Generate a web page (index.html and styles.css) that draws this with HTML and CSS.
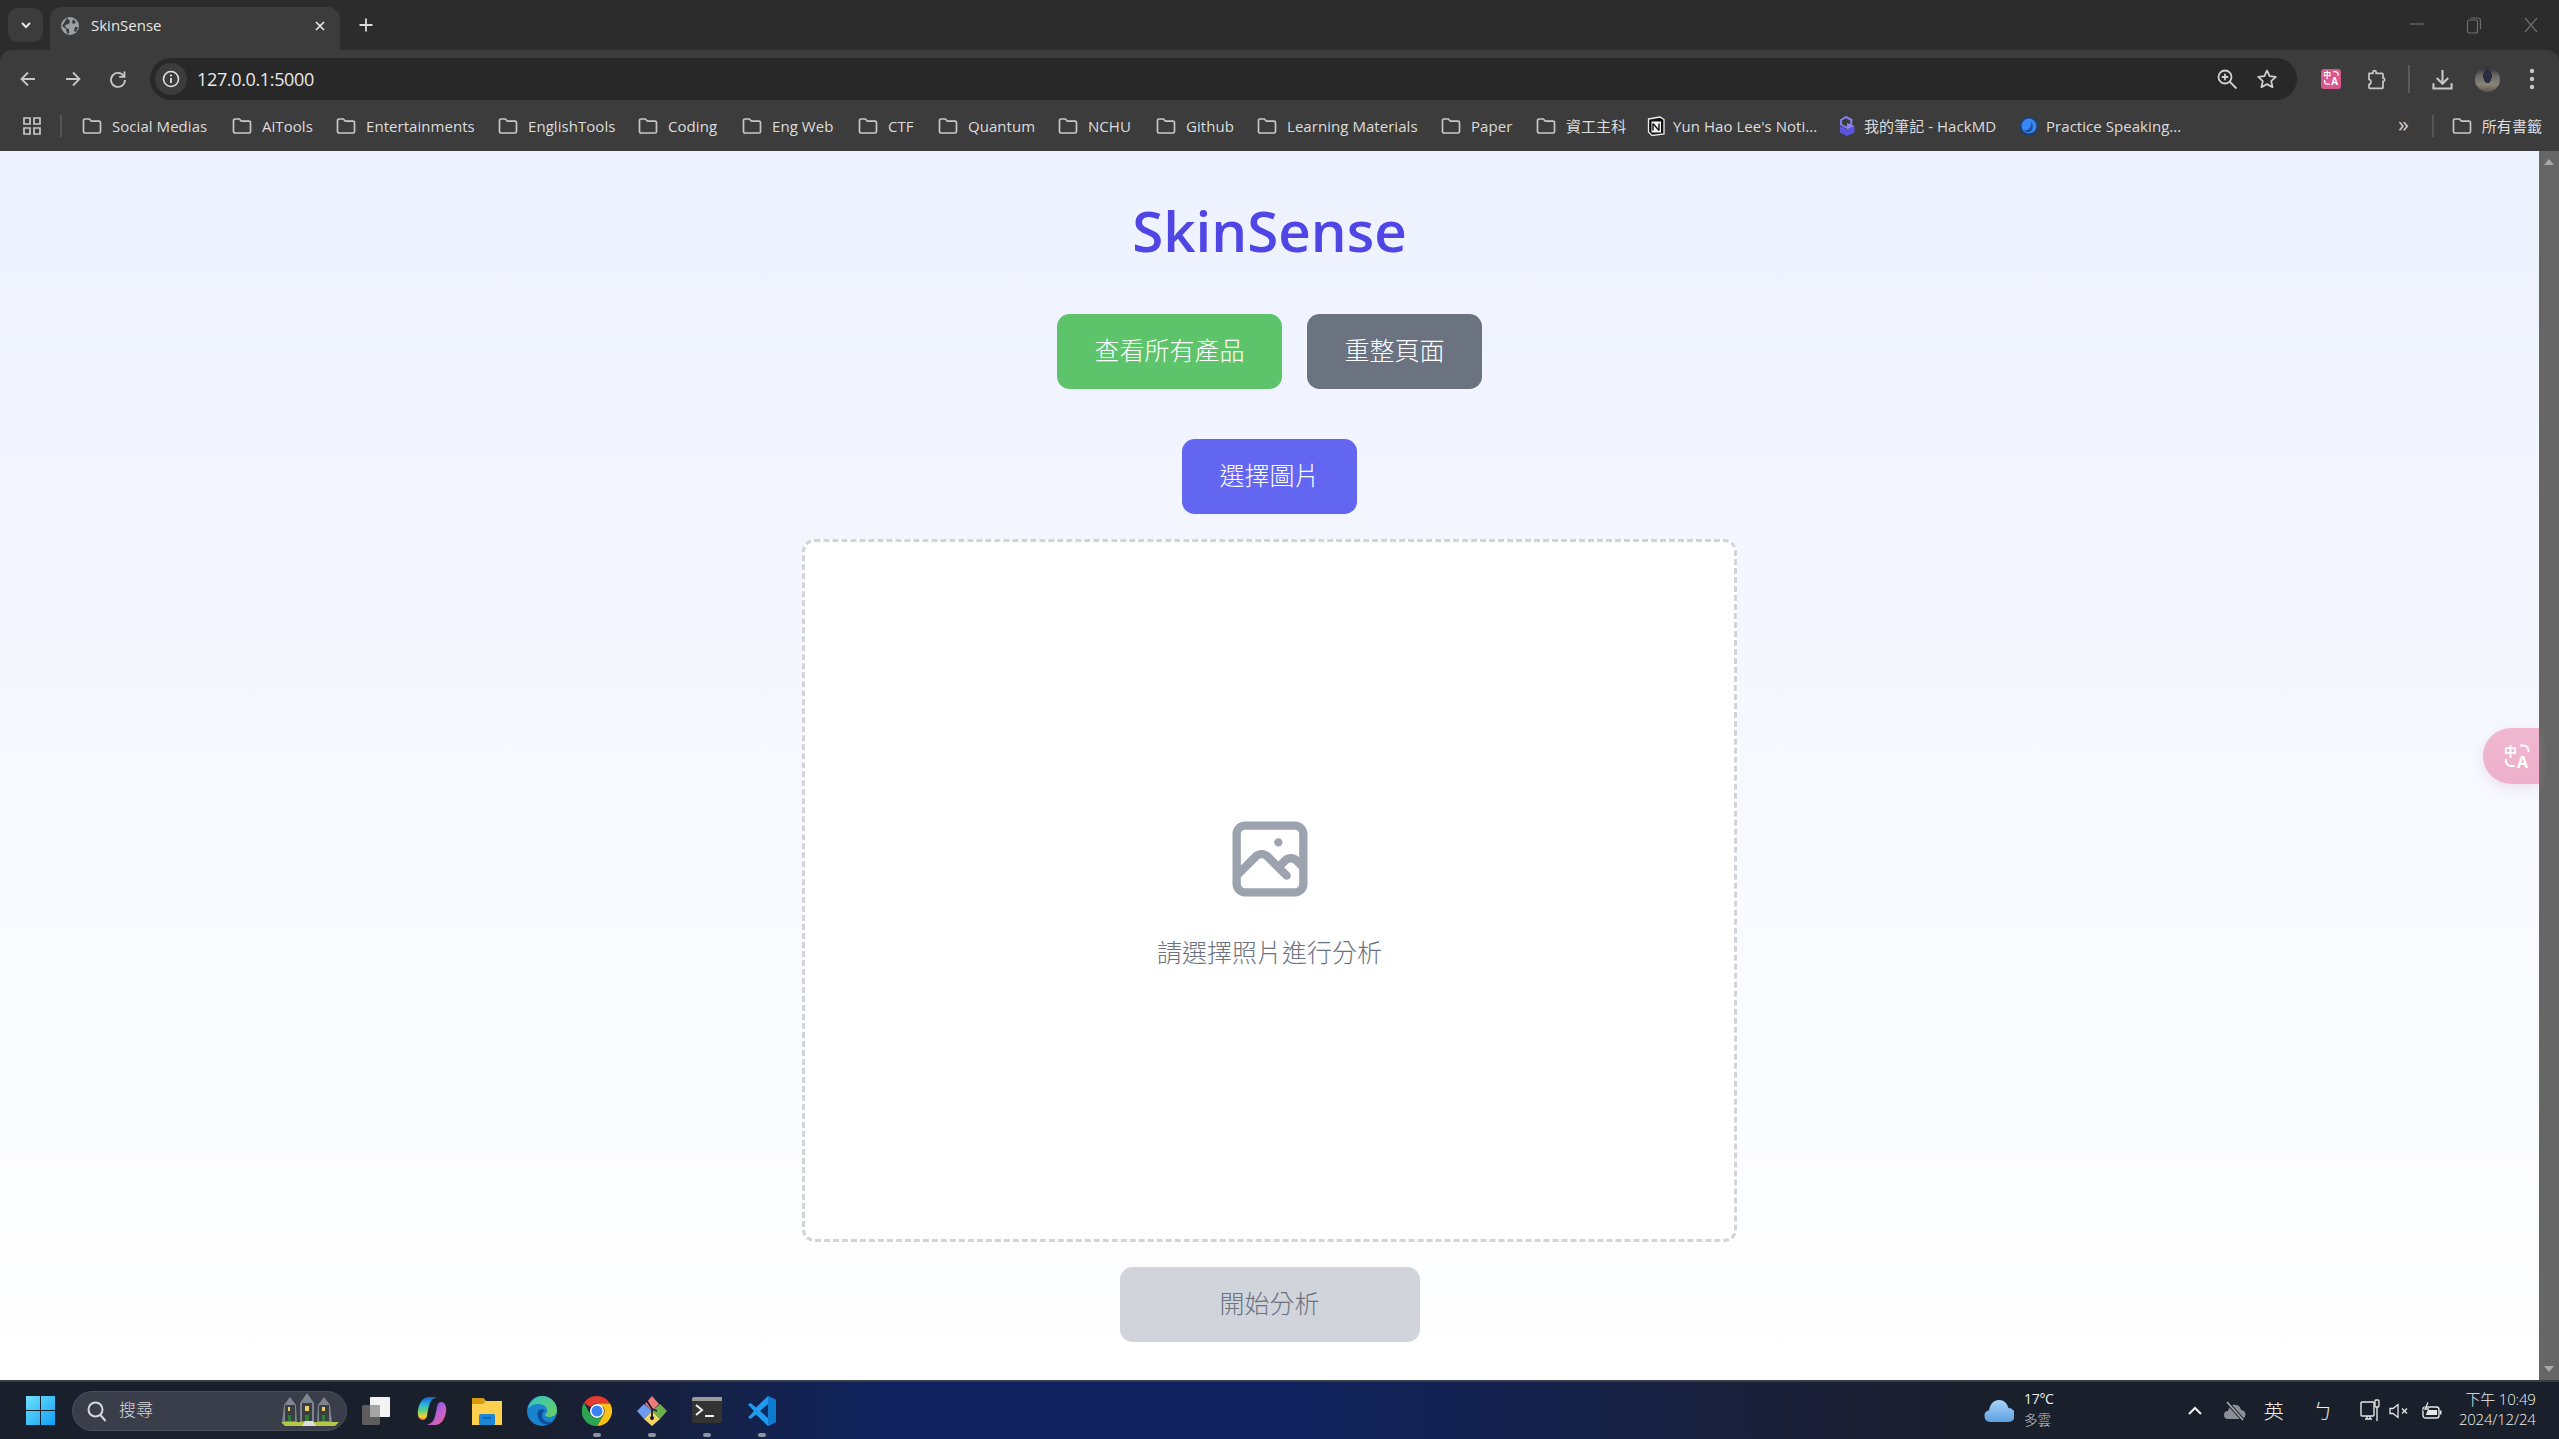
FILE: index.html
```html
<!DOCTYPE html>
<html lang="zh-Hant">
<head>
<meta charset="utf-8">
<title>SkinSense</title>
<link rel="stylesheet" href="styles.css">
</head>
<body>
<svg class="defs" width="0" height="0">
  <symbol id="folder" viewBox="0 0 20 20"><path d="M1.500 4.600c0-.9.700-1.600 1.600-1.600h4.300l2 2.200h7.500c.9 0 1.600.7 1.600 1.600v8.600c0 .9-.7 1.600-1.600 1.600H3.100c-.9 0-1.600-.7-1.600-1.600z" fill="none" stroke="#c7c7c7" stroke-width="1.700" stroke-linejoin="round"/></symbol>
</svg>
<div class="window">
  <header class="tabstrip">
    <button class="tab-search"><svg width="14" height="14" viewBox="0 0 14 14"><path d="M3 5l4 4 4-4" fill="none" stroke="#e6e6e6" stroke-width="2"/></svg></button>
    <div class="tab">
      <svg class="favicon" width="20" height="20" viewBox="0 0 20 20"><circle cx="10" cy="10" r="9" fill="#9aa0a6"/><path d="M7 2l3 3-1 3-4 1 1 3 3 1v5l-2-1-1-4-4-3zM13 3l3 3-2 2-2-1zM15 11l3 0-2 5-2-1z" fill="#3c3c3c"/></svg>
      <span class="tab-title">SkinSense</span>
      <svg class="tab-close" width="14" height="14" viewBox="0 0 14 14"><path d="M3 3l8 8M11 3l-8 8" stroke="#e6e6e6" stroke-width="1.700"/></svg>
    </div>
    <svg class="new-tab" width="18" height="18" viewBox="0 0 18 18"><path d="M9 2.500v13M2.500 9h13" stroke="#dcdcdc" stroke-width="1.800"/></svg>
    <div class="win-controls">
      <svg width="16" height="16" viewBox="0 0 16 16"><path d="M1 8h14" stroke="#6e6e6e" stroke-width="1.200"/></svg>
      <svg width="16" height="18" viewBox="0 0 16 18"><rect x="1.500" y="4" width="10" height="13" rx="2" fill="none" stroke="#6e6e6e" stroke-width="1.200"/><path d="M4.500 2h7c2 0 3 1 3 3v8" fill="none" stroke="#6e6e6e" stroke-width="1.200"/></svg>
      <svg width="16" height="18" viewBox="0 0 16 18"><path d="M2 2l12 14M14 2L2 16" stroke="#6e6e6e" stroke-width="1.200"/></svg>
    </div>
  </header>

  <nav class="toolbar">
    <div class="nav-row">
      <button class="nav-btn"><svg width="20" height="20" viewBox="0 0 20 20"><path d="M17 10H4M10 3.500L3.500 10l6.500 6.500" fill="none" stroke="#c7c7c7" stroke-width="1.800"/></svg></button>
      <button class="nav-btn"><svg width="20" height="20" viewBox="0 0 20 20"><path d="M3 10h13M10 3.500l6.500 6.500-6.500 6.500" fill="none" stroke="#c7c7c7" stroke-width="1.800"/></svg></button>
      <button class="nav-btn"><svg width="20" height="20" viewBox="0 0 20 20"><path d="M15.800 7A7 7 0 1 0 17 11" fill="none" stroke="#c7c7c7" stroke-width="1.800"/><path d="M16.500 2.500V7.800H11.200" fill="none" stroke="#c7c7c7" stroke-width="1.800"/></svg></button>
      <div class="omnibox">
        <span class="site-info"><svg width="20" height="20" viewBox="0 0 20 20"><circle cx="10" cy="10" r="7.500" fill="none" stroke="#e0e0e0" stroke-width="1.600"/><path d="M10 9v5" stroke="#e0e0e0" stroke-width="1.800"/><circle cx="10" cy="6.500" r="1.100" fill="#e0e0e0"/></svg></span>
        <span class="url">127.0.0.1:5000</span>
        <svg class="omni-zoom" width="22" height="22" viewBox="0 0 22 22"><circle cx="9" cy="9" r="6.500" fill="none" stroke="#d0d0d0" stroke-width="1.800"/><path d="M9 5.800v6.400M5.800 9h6.400" stroke="#d0d0d0" stroke-width="1.800"/><path d="M14 14l6.500 6.500" stroke="#d0d0d0" stroke-width="1.800"/></svg>
        <svg class="omni-star" width="22" height="22" viewBox="0 0 22 22"><path d="M11 2.500l2.600 5.700 6.200.7-4.600 4.200 1.300 6.100-5.500-3.100-5.500 3.100 1.300-6.100L2.200 8.900l6.200-.7z" fill="none" stroke="#d0d0d0" stroke-width="1.800" stroke-linejoin="round"/></svg>
      </div>
      <div class="ext-area">
        <span class="ext-translate"><svg width="19" height="20" viewBox="-2 -3 31 33"><text x="0" y="11.500" class="tr-zh">中</text><text x="13" y="23.500" class="tr-a">A</text><path d="M16 1.500h3.500a5 5 0 0 1 5 4.500v2M2 15v2a5 5 0 0 0 5 5h3.500" fill="none" stroke="#fff" stroke-width="2"/></svg></span>
        <svg class="ext-puzzle" width="20" height="21" viewBox="0 0 22 24"><path d="M3 5h4.500V3.500c0-1 .8-1.700 1.800-1.700s1.800.7 1.800 1.700V5H18c.6 0 1 .4 1 1v4.500h.5c1.800 0 1.800 3.500 0 3.500H19v7c0 .6-.4 1-1 1H4c-.6 0-1-.4-1-1v-3.500c3-.2 3-5.300 0-5.500V6c0-.6.400-1 1-1z" fill="none" stroke="#c7c7c7" stroke-width="2" stroke-linejoin="round"/></svg>
        <span class="ext-divider"></span>
        <svg class="ext-download" width="21" height="21" viewBox="0 0 22 22"><path d="M11 1v14M5 9.500l6 6 6-6" fill="none" stroke="#c7c7c7" stroke-width="2.200"/><path d="M1.500 15v5.500h19V15" fill="none" stroke="#c7c7c7" stroke-width="2.200"/></svg>
        <span class="avatar"></span>
        <svg class="ext-menu" width="6" height="24" viewBox="0 0 6 24"><circle cx="3" cy="4" r="2.200" fill="#c7c7c7"/><circle cx="3" cy="12" r="2.200" fill="#c7c7c7"/><circle cx="3" cy="20" r="2.200" fill="#c7c7c7"/></svg>
      </div>
    </div>
    <div class="bookmarks">
      <svg class="apps" width="18" height="18" viewBox="0 0 18 18"><path d="M1 1h6v6H1zM11 1h6v6h-6zM1 11h6v6H1zM11 11h6v6h-6z" fill="none" stroke="#c7c7c7" stroke-width="1.700"/></svg>
      <span class="bm-divider"></span>
      <a class="bm bm-w97"><svg class="ico"><use href="#folder"/></svg>Social Medias</a>
      <a class="bm bm-w50"><svg class="ico"><use href="#folder"/></svg>AiTools</a>
      <a class="bm bm-w107"><svg class="ico"><use href="#folder"/></svg>Entertainments</a>
      <a class="bm bm-w86"><svg class="ico"><use href="#folder"/></svg>EnglishTools</a>
      <a class="bm bm-w50"><svg class="ico"><use href="#folder"/></svg>Coding</a>
      <a class="bm bm-w62"><svg class="ico"><use href="#folder"/></svg>Eng Web</a>
      <a class="bm bm-w25"><svg class="ico"><use href="#folder"/></svg>CTF</a>
      <a class="bm bm-w66"><svg class="ico"><use href="#folder"/></svg>Quantum</a>
      <a class="bm bm-w44"><svg class="ico"><use href="#folder"/></svg>NCHU</a>
      <a class="bm bm-w48"><svg class="ico"><use href="#folder"/></svg>Github</a>
      <a class="bm bm-w130"><svg class="ico"><use href="#folder"/></svg>Learning Materials</a>
      <a class="bm bm-w41"><svg class="ico"><use href="#folder"/></svg>Paper</a>
      <a class="bm bm-w60"><svg class="ico"><use href="#folder"/></svg>資工主科</a>
      <a class="bm bm-w145 bm-tight"><svg class="ico" viewBox="0 0 20 20"><path d="M2.500 3L14 1l4 2.500V18L6 19.500 2.500 16z" fill="#111" stroke="#eee" stroke-width="1.300"/><path d="M5.500 5.500h9.500v11H5.500z" fill="#f4f4f4"/><path d="M7 7.500v7M7 7.500l6 7M13 7.500v7" stroke="#111" stroke-width="1.400" fill="none"/></svg>Yun Hao Lee's Noti...</a>
      <a class="bm bm-w135 bm-tight"><svg class="ico" viewBox="0 0 20 20"><path d="M9 1l5.500 3-.5 5-5 2.500L4 8.500V4z" fill="none" stroke="#8480f0" stroke-width="2" stroke-linejoin="round"/><path d="M3 10l7 3.500 7.500-3.500v6.500L10 20l-7-3.500z" fill="#5a55e0"/><path d="M10 7l7.500 3-7.500 3.500z" fill="#8a86f5"/></svg>我的筆記 - HackMD</a>
      <a class="bm bm-w135 bm-tight"><svg class="ico" viewBox="0 0 20 20"><circle cx="10" cy="10" r="9.500" fill="#1d3e73"/><circle cx="10" cy="10" r="7.500" fill="#3a86f0"/><path d="M5 14c5 1 8-3 7-8 3 3 2 9-2 10-2 .5-4-.5-5-2z" fill="#1d4d96"/></svg>Practice Speaking...</a>
      <span class="bm-more">»</span>
      <span class="bm-divider bm-divider-end"></span>
      <a class="bm bm-all"><svg class="ico"><use href="#folder"/></svg>所有書籤</a>
    </div>
  </nav>

  <div class="viewport">
    <main class="page">
      <h1 class="brand">SkinSense</h1>
      <div class="actions">
        <button class="btn btn-green">查看所有產品</button>
        <button class="btn btn-gray">重整頁面</button>
      </div>
      <button class="btn btn-indigo">選擇圖片</button>
      <section class="dropzone">
        <svg class="photo-icon" width="100" height="100" viewBox="0 0 24 24" fill="none" stroke="#9ca3af" stroke-width="2" stroke-linecap="round" stroke-linejoin="round"><path d="M4 16l4.586-4.586a2 2 0 012.828 0L16 16m-2-2l1.586-1.586a2 2 0 012.828 0L20 14m-6-6h.01M6 20h12a2 2 0 002-2V6a2 2 0 00-2-2H6a2 2 0 00-2 2v12a2 2 0 002 2z"/></svg>
        <p class="hint">請選擇照片進行分析</p>
      </section>
      <button class="btn btn-disabled" disabled>開始分析</button>
    </main>
    <div class="float-translate"><svg width="31" height="33" viewBox="-2 -3 31 33"><text x="0" y="11.500" class="tr-zh">中</text><text x="13" y="23.500" class="tr-a">A</text><path d="M16 1.500h3.500a5 5 0 0 1 5 4.500v2M2 15v2a5 5 0 0 0 5 5h3.500" fill="none" stroke="#fff" stroke-width="2"/></svg></div>
    <div class="scrollbar">
      <span class="arrow-up"></span>
      <span class="arrow-down"></span>
    </div>
  </div>

  <footer class="taskbar">
    <svg class="win-logo" width="29" height="29" viewBox="0 0 29 29"><defs><linearGradient id="wl" x1="0" y1="0" x2="1" y2="1"><stop offset="0" stop-color="#6fe3fb"/><stop offset="1" stop-color="#0f9cf5"/></linearGradient></defs><path d="M0 0h14v14H0zM15 0h14v14H15zM0 15h14v14H0zM15 15h14v14H15z" fill="url(#wl)"/></svg>
    <div class="search">
      <svg width="24" height="24" viewBox="0 0 24 24"><circle cx="10.500" cy="10.500" r="7" fill="none" stroke="#d5d7db" stroke-width="2"/><path d="M15.500 16l5 6" stroke="#d5d7db" stroke-width="2"/></svg>
      <span class="search-text">搜尋</span>
      <svg class="search-art" width="60" height="36" viewBox="0 0 60 36"><path d="M1 32l2-18 6-8 6 8 1 18zM19 32V12l7-10 7 10v20zM36 32l1-18 6-8 6 8 2 18z" fill="#7c8590"/><path d="M4 14h10v16H4zM21 12h10v18H21zM38 14h10v16H38z" fill="#3c3f3f"/><path d="M7 16h2v4H7zM24 15h4v5h-4zM41 16h3v4h-3z" fill="#e9cf6b"/><path d="M7 24h3v6H7zM24 24h4v6h-4zM41 24h3v6h-3z" fill="#2e7a38"/><path d="M0 31h58l-4 4H4z" fill="#b4c746"/><path d="M24 30h8l3 5H21z" fill="#ddd"/></svg>
    </div>
    <div class="task-icons">
      <span class="task-cell"><svg width="30" height="30" viewBox="0 0 30 30"><rect x="0" y="9" width="18" height="20" rx="1.500" fill="#5d5d5d"/><rect x="8" y="1" width="20" height="20" rx="1" fill="#f3f3f3"/><rect x="8" y="9" width="10" height="12" fill="#a5a5a5"/></svg></span>
      <span class="task-cell"><svg width="30" height="30" viewBox="0 0 30 30"><defs><linearGradient id="cp1" x1="0" y1="0" x2="0" y2="1"><stop offset="0" stop-color="#1560d8"/><stop offset=".35" stop-color="#2fb6d8"/><stop offset=".6" stop-color="#5fd07a"/><stop offset=".85" stop-color="#f5d33a"/><stop offset="1" stop-color="#f0664a"/></linearGradient><linearGradient id="cp2" x1="0" y1="0" x2="1" y2="1"><stop offset="0" stop-color="#2a48d8"/><stop offset=".5" stop-color="#b45fd8"/><stop offset="1" stop-color="#f4648a"/></linearGradient></defs><path d="M12 1h8l-4 2c-3 2-4 6-5 11l-1 6c-.5 2-2 4-4 4-4 0-6-5-5-10C2 7 6 1 12 1z" fill="url(#cp1)"/><path d="M18 29h-8l4-2c3-2 4-6 5-11l1-6c.5-2 2-4 4-4 4 0 6 5 5 10-1 7-5 13-11 13z" fill="url(#cp2)"/></svg></span>
      <span class="task-cell"><svg width="30" height="30" viewBox="0 0 30 30"><path d="M0 2h11l3 3h16v24H0z" fill="#ffd04d"/><path d="M0 2h11l3 3-3 3H0z" fill="#d79b13"/><rect x="7" y="18" width="16" height="11" rx="1.500" fill="#1c86d8"/><path d="M11 22h8" stroke="#0b5aa5" stroke-width="1.500"/></svg></span>
      <span class="task-cell"><svg width="30" height="30" viewBox="0 0 30 30"><defs><linearGradient id="ed" x1="0" y1="0" x2="1" y2="1"><stop offset="0" stop-color="#35c3c1"/><stop offset="1" stop-color="#6ad15a"/></linearGradient></defs><circle cx="15" cy="15" r="15" fill="#1b82cf"/><path d="M1 13C3 4 10 0 15 0c9 0 15 7 15 14 0 5-4 7-8 7-2 0-4-1-4-3 3-1 3-5 0-8-4-3-13-3-17 3z" fill="url(#ed)"/><path d="M12 14c-3 3-2 11 5 14 3 1 7 0 9-2-6 1-11-2-11-6 0-2 0-4 3-5-2-2-4-2-6-1z" fill="#0f4f96"/></svg></span>
      <span class="task-cell"><svg width="30" height="30" viewBox="0 0 30 30"><path d="M15 0a15 15 0 0 1 13 7.500H15a7.500 7.500 0 0 0-6.500 3.800L2 7A15 15 0 0 1 15 0z" fill="#e33b2e"/><path d="M28 7.500A15 15 0 0 1 15 30l6.500-11.200a7.500 7.500 0 0 0 0-7.500L15 7.500z" fill="#fbc116"/><path d="M2 7l6.500 11.200A7.500 7.500 0 0 0 21.500 18.800L15 30A15 15 0 0 1 2 7z" fill="#2da44e"/><circle cx="15" cy="15" r="7" fill="#fff"/><circle cx="15" cy="15" r="5.500" fill="#3b82f6"/></svg><i class="run-dot"></i></span>
      <span class="task-cell"><svg width="30" height="30" viewBox="0 0 30 30"><path d="M15 0l7 8-7 7-7-7z" fill="#ee7a78"/><path d="M7 8l8 7-8 8-7-8z" fill="#6e9bf2"/><path d="M23 8l7 7-7 8-8-8z" fill="#6fb04a"/><path d="M15 15l8 8-8 7-8-7z" fill="#f5d56a"/><path d="M10 5l5 8v9M15 13l5 2" fill="none" stroke="#1a1f2e" stroke-width="1.800"/><circle cx="15" cy="22" r="2" fill="#1a1f2e"/></svg><i class="run-dot"></i></span>
      <span class="task-cell"><svg width="30" height="30" viewBox="0 0 30 30"><rect y="1" width="30" height="26" rx="2" fill="#333"/><path d="M0 3c0-1 1-2 2-2h28v4H0z" fill="#9a9a9a"/><path d="M4 9l6 5-6 5" fill="none" stroke="#eee" stroke-width="2"/><path d="M13 20h9" stroke="#eee" stroke-width="2"/></svg><i class="run-dot"></i></span>
      <span class="task-cell"><svg width="30" height="30" viewBox="0 0 30 30"><path d="M21 0l8 4v22l-8 4L9 18.500 3.500 23 1 21.500 7 15 1 8.500 3.500 7 9 11.500z" fill="#1f9cf0"/><path d="M21 8l-8 7 8 7z" fill="#0d2a62"/><path d="M21 0l8 4v22l-8 4z" fill="#0e7ad0"/></svg><i class="run-dot"></i></span>
    </div>
    <div class="weather">
      <svg width="30" height="22" viewBox="0 0 30 22"><defs><linearGradient id="cl" x1="0" y1="0" x2="0" y2="1"><stop offset="0" stop-color="#a9d4fb"/><stop offset="1" stop-color="#5e9fe0"/></linearGradient></defs><path d="M6 22a6 6 0 0 1-1-11.800C6 4 10 0 15 0s8 3 9.500 8A7 7 0 0 1 24 22z" fill="url(#cl)"/></svg>
      <div class="weather-text"><span>17°C</span><span class="weather-sub">多雲</span></div>
    </div>
    <div class="tray">
      <svg class="tray-chevron" width="16" height="10" viewBox="0 0 16 10"><path d="M2 8l6-6 6 6" fill="none" stroke="#f0f0f0" stroke-width="2"/></svg>
      <svg class="tray-cloud" width="22" height="20" viewBox="0 0 22 20"><path d="M4 18a4 4 0 0 1 0-8c1-4 4-7 8-6 3 0 5 3 5 5a4.500 4.500 0 0 1 0 9z" fill="#8b8f94"/><path d="M3 1l16 18" stroke="#20232c" stroke-width="3.500"/><path d="M3 1l16 18" stroke="#a9adb2" stroke-width="1.500"/></svg>
      <span class="tray-ime">英</span>
      <span class="tray-bopomofo">ㄅ</span>
      <svg class="tray-device" width="20" height="24" viewBox="0 0 20 24"><rect x="1" y="3" width="13" height="14" rx="1" fill="none" stroke="#e6e6e6" stroke-width="1.400"/><path d="M5 20h7M7 17v3M10 17v3" stroke="#e6e6e6" stroke-width="1.400"/><rect x="15" y="1" width="4" height="7" rx="1" fill="#20232c" stroke="#e6e6e6" stroke-width="1.300"/><path d="M17 8v14" stroke="#e6e6e6" stroke-width="1.400"/></svg>
      <svg class="tray-sound" width="20" height="16" viewBox="0 0 20 16"><path d="M1 5.500h3L9 1.500v13l-5-4H1z" fill="none" stroke="#e6e6e6" stroke-width="1.300"/><path d="M13 5.500l5 5M18 5.500l-5 5" stroke="#e6e6e6" stroke-width="1.400"/></svg>
      <svg class="tray-battery" width="21" height="18" viewBox="0 0 21 18"><rect x="1" y="5" width="16" height="11" rx="2.500" fill="none" stroke="#e6e6e6" stroke-width="1.400"/><rect x="4" y="8" width="11" height="5" fill="#e6e6e6"/><path d="M18 8.500h1.500v4H18z" fill="#e6e6e6"/><path d="M6 0L2 8h3L3 13" fill="none" stroke="#20232c" stroke-width="1.500"/><path d="M6 0.500L3 7h4" fill="none" stroke="#e6e6e6" stroke-width="1.300"/></svg>
      <div class="clock"><span>下午 10:49</span><span>2024/12/24</span></div>
    </div>
  </footer>
</div>
</body>
</html>
```
FILE: styles.css
```css
* { box-sizing: border-box; }
html, body { margin: 0; height: 100%; overflow: hidden; }
body { font-family: "Open Sans", "Noto Sans CJK TC", sans-serif; }
.defs { position: absolute; }
.tr-zh { font: 700 13px "Noto Sans CJK TC", sans-serif; fill: #fff; }
.tr-a { font: 700 16px "Open Sans", sans-serif; fill: #fff; }
button { font: inherit; border: 0; padding: 0; background: none; }
svg { display: block; flex: none; }

.window { width: 2559px; height: 1439px; display: flex; flex-direction: column; background: #2c2c2c; }

/* tab strip */
.tabstrip { height: 50px; flex: none; display: flex; align-items: flex-start; padding-left: 8px; color: #e6e6e6; }
.tab-search { width: 35px; height: 34px; margin-top: 8px; border-radius: 10px; background: #3c3c3c; display: flex; align-items: center; justify-content: center; }
.tab { width: 290px; height: 43px; margin: 7px 0 0 7px; background: #3c3c3c; border-radius: 12px 12px 0 0; display: flex; align-items: center; padding: 0 13px 6px 10px; }
.tab-title { font-size: 15px; line-height: 20px; margin: 0 0 2px 11px; flex: 1; }
.new-tab { margin: 16px 0 0 17px; }
.win-controls { margin-left: auto; margin-top: 16px; padding-right: 20px; display: flex; gap: 41px; }

/* toolbar */
.toolbar { height: 101px; flex: none; background: #3c3c3c; border-radius: 12px 12px 0 0; display: flex; flex-direction: column; }
.nav-row { height: 50px; padding: 8px 0 0 6px; display: flex; align-items: stretch; }
.nav-btn { width: 44px; margin-right: 1px; display: flex; align-items: center; justify-content: center; }
.omnibox { flex: 1; margin-left: 9px; background: #282828; border-radius: 21px; display: flex; align-items: center; padding: 0 19px 0 5px; }
.site-info { width: 32px; height: 32px; border-radius: 50%; background: #3c3c3c; display: flex; align-items: center; justify-content: center; }
.url { font-size: 18px; color: #e8e8e8; margin-left: 10px; letter-spacing: -.35px; flex: 1; }
.omni-star { margin-left: 18px; }
.ext-area { width: 262px; display: flex; align-items: center; padding-left: 24px; }
.ext-translate { width: 20px; height: 20px; border-radius: 3px; background: #d8588d; display: flex; align-items: center; justify-content: center; }
.ext-puzzle { margin-left: 25px; }
.ext-divider { width: 2px; height: 28px; background: #5a5a5a; margin-left: 22px; }
.ext-download { margin-left: 22px; }
.avatar { width: 25px; height: 25px; border-radius: 50%; margin-left: 22px; background: radial-gradient(ellipse 18% 30% at 50% 36%, #2a2d42 0 90%, transparent 100%), linear-gradient(#2f2f32 0, #6a6a68 35%, #8a8478 70%, #5c564a 100%); }
.ext-menu { margin-left: 29px; }

.bookmarks { height: 51px; display: flex; align-items: center; padding-left: 23px; color: #dcdcdc; font-size: 15px; white-space: nowrap; }
.apps { margin-right: 19px; }
.bm-divider { width: 2px; height: 22px; background: #555; margin-right: 20px; }
.bm { display: flex; align-items: center; gap: 10px; margin-right: 23px; letter-spacing: .05px; }
.ico { width: 20px; height: 20px; flex: none; }
.bm-w97 { width: 127px; } .bm-w50 { width: 81px; } .bm-w107 { width: 139px; }
.bm-w86 { width: 117px; } .bm-w62 { width: 93px; } .bm-w25 { width: 57px; }
.bm-w66 { width: 97px; } .bm-w44 { width: 75px; } .bm-w48 { width: 78px; }
.bm-w130 { width: 161px; } .bm-w41 { width: 72px; } .bm-w60 { width: 87px; margin-right: 23px; }
.bm-w145 { width: 171px; } .bm-w135 { width: 162px; }
.bm-tight { gap: 7px; margin-right: 20px; }
.bm-more { margin-left: auto; font-size: 22px; line-height: 22px; margin-top: -5px; color: #d0d0d0; margin-right: 23px; }
.bm-divider-end { margin-right: 18px; }
.bm-all { margin-right: 17px; }

/* page */
.viewport { height: 1229px; flex: none; display: flex; position: relative; }
.page { flex: 1; height: 1229px; background: linear-gradient(#eef2ff, #fff); display: flex; flex-direction: column; align-items: center; padding-top: 50px; font-family: "Noto Sans CJK TC", "Open Sans", sans-serif; }
.brand { margin: 0; font-family: "Open Sans", sans-serif; font-size: 56.500px; line-height: 60px; font-weight: 600; color: #4f46e5; }
.actions { display: flex; gap: 25px; margin: 53px 0 50px; }
.btn { height: 75px; padding: 0 37.500px 5px; border-radius: 12.500px; font-size: 25px; font-weight: 300; line-height: 35px; color: #fff; }
.btn-green { background: #5ec46b; }
.btn-gray { background: #6b7280; }
.btn-indigo { background: #6366f1; }
.btn-disabled { background: #d1d5db; color: #6b7280; width: 300px; }
.dropzone { width: 935px; height: 703px; margin: 25px 0; padding-bottom: 3px; border: 3px dashed #d1d5db; border-radius: 12.500px; background: #fff; display: flex; flex-direction: column; align-items: center; justify-content: center; }
.hint { margin: 25px 0 0; font-size: 25px; font-weight: 300; line-height: 35px; color: #6b7280; }
.scrollbar { width: 20px; background: #666; display: flex; flex-direction: column; justify-content: space-between; align-items: center; padding: 8px 0; }
.arrow-up { border: 5px solid transparent; border-top: 0; border-bottom: 6px solid #a8a8a8; }
.arrow-down { border: 5px solid transparent; border-bottom: 0; border-top: 6px solid #a8a8a8; }
.float-translate { position: absolute; right: 20px; top: 577px; width: 56px; height: 56px; padding: 2px 0 0 12px; border-radius: 28px 0 0 28px; background: linear-gradient(#f0b8d0, #eeb0cb); box-shadow: 0 4px 12px rgba(200,150,180,.25); display: flex; align-items: center; justify-content: center; }

/* taskbar */
.taskbar { height: 59px; flex: none; border-top: 2px solid #3b3e46; background: linear-gradient(90deg, #1a1f2c 0, #1a1f2c 20%, #10235f 35%, #10235f 50%, #1a2038 70%, #1a1f2c 78%, #1a1f2c 100%); display: flex; align-items: center; padding-left: 26px; color: #f0f0f0; font-family: "Noto Sans CJK TC", "Open Sans", sans-serif; }
.win-logo { margin-right: 17px; }
.search { width: 275px; height: 40px; border-radius: 20px; background: #3a3e4b; border: 1px solid #4a4e5a; display: flex; align-items: center; padding-left: 12px; position: relative; }
.search-text { font-size: 17px; margin: 0 0 4px 10px; font-weight: 300; color: #d5d7db; }
.search-art { margin-left: auto; margin-right: 5px; margin-top: -4px; }
.task-icons { display: flex; margin-left: 2px; }
.task-cell { width: 55px; height: 56px; display: flex; align-items: center; justify-content: center; position: relative; }
.run-dot { position: absolute; left: 23.500px; bottom: 2px; width: 8px; height: 4px; border-radius: 2px; background: #8d93a0; }
.weather { display: flex; align-items: center; gap: 10px; margin-left: 1195px; }
.weather-text { display: flex; flex-direction: column; padding-bottom: 3px; font-size: 14px; line-height: 20px; font-family: "Open Sans", "Noto Sans CJK TC", sans-serif; letter-spacing: -.3px; }
.weather-sub { color: #c6c8cc; font-size: 13.500px; font-family: "Noto Sans CJK TC", sans-serif; font-weight: 300; letter-spacing: 0; }
.tray { display: flex; align-items: center; margin-left: 133px; }
.tray-cloud { margin-left: 21px; }
.tray-ime { font-size: 20px; font-weight: 300; margin-left: 18px; width: 20px; }
.tray-bopomofo { font-size: 20px; font-weight: 300; margin-left: 29px; width: 20px; }
.tray-device { margin-left: 27px; }
.tray-sound { margin-left: 9px; }
.tray-battery { margin-left: 13px; }
.clock { margin-left: 15px; width: 78px; padding-bottom: 3px; display: flex; flex-direction: column; align-items: flex-end; font-size: 15px; line-height: 20px; letter-spacing: -.2px; font-weight: 300; white-space: nowrap; font-family: "Open Sans", "Noto Sans CJK TC", sans-serif; }
```
